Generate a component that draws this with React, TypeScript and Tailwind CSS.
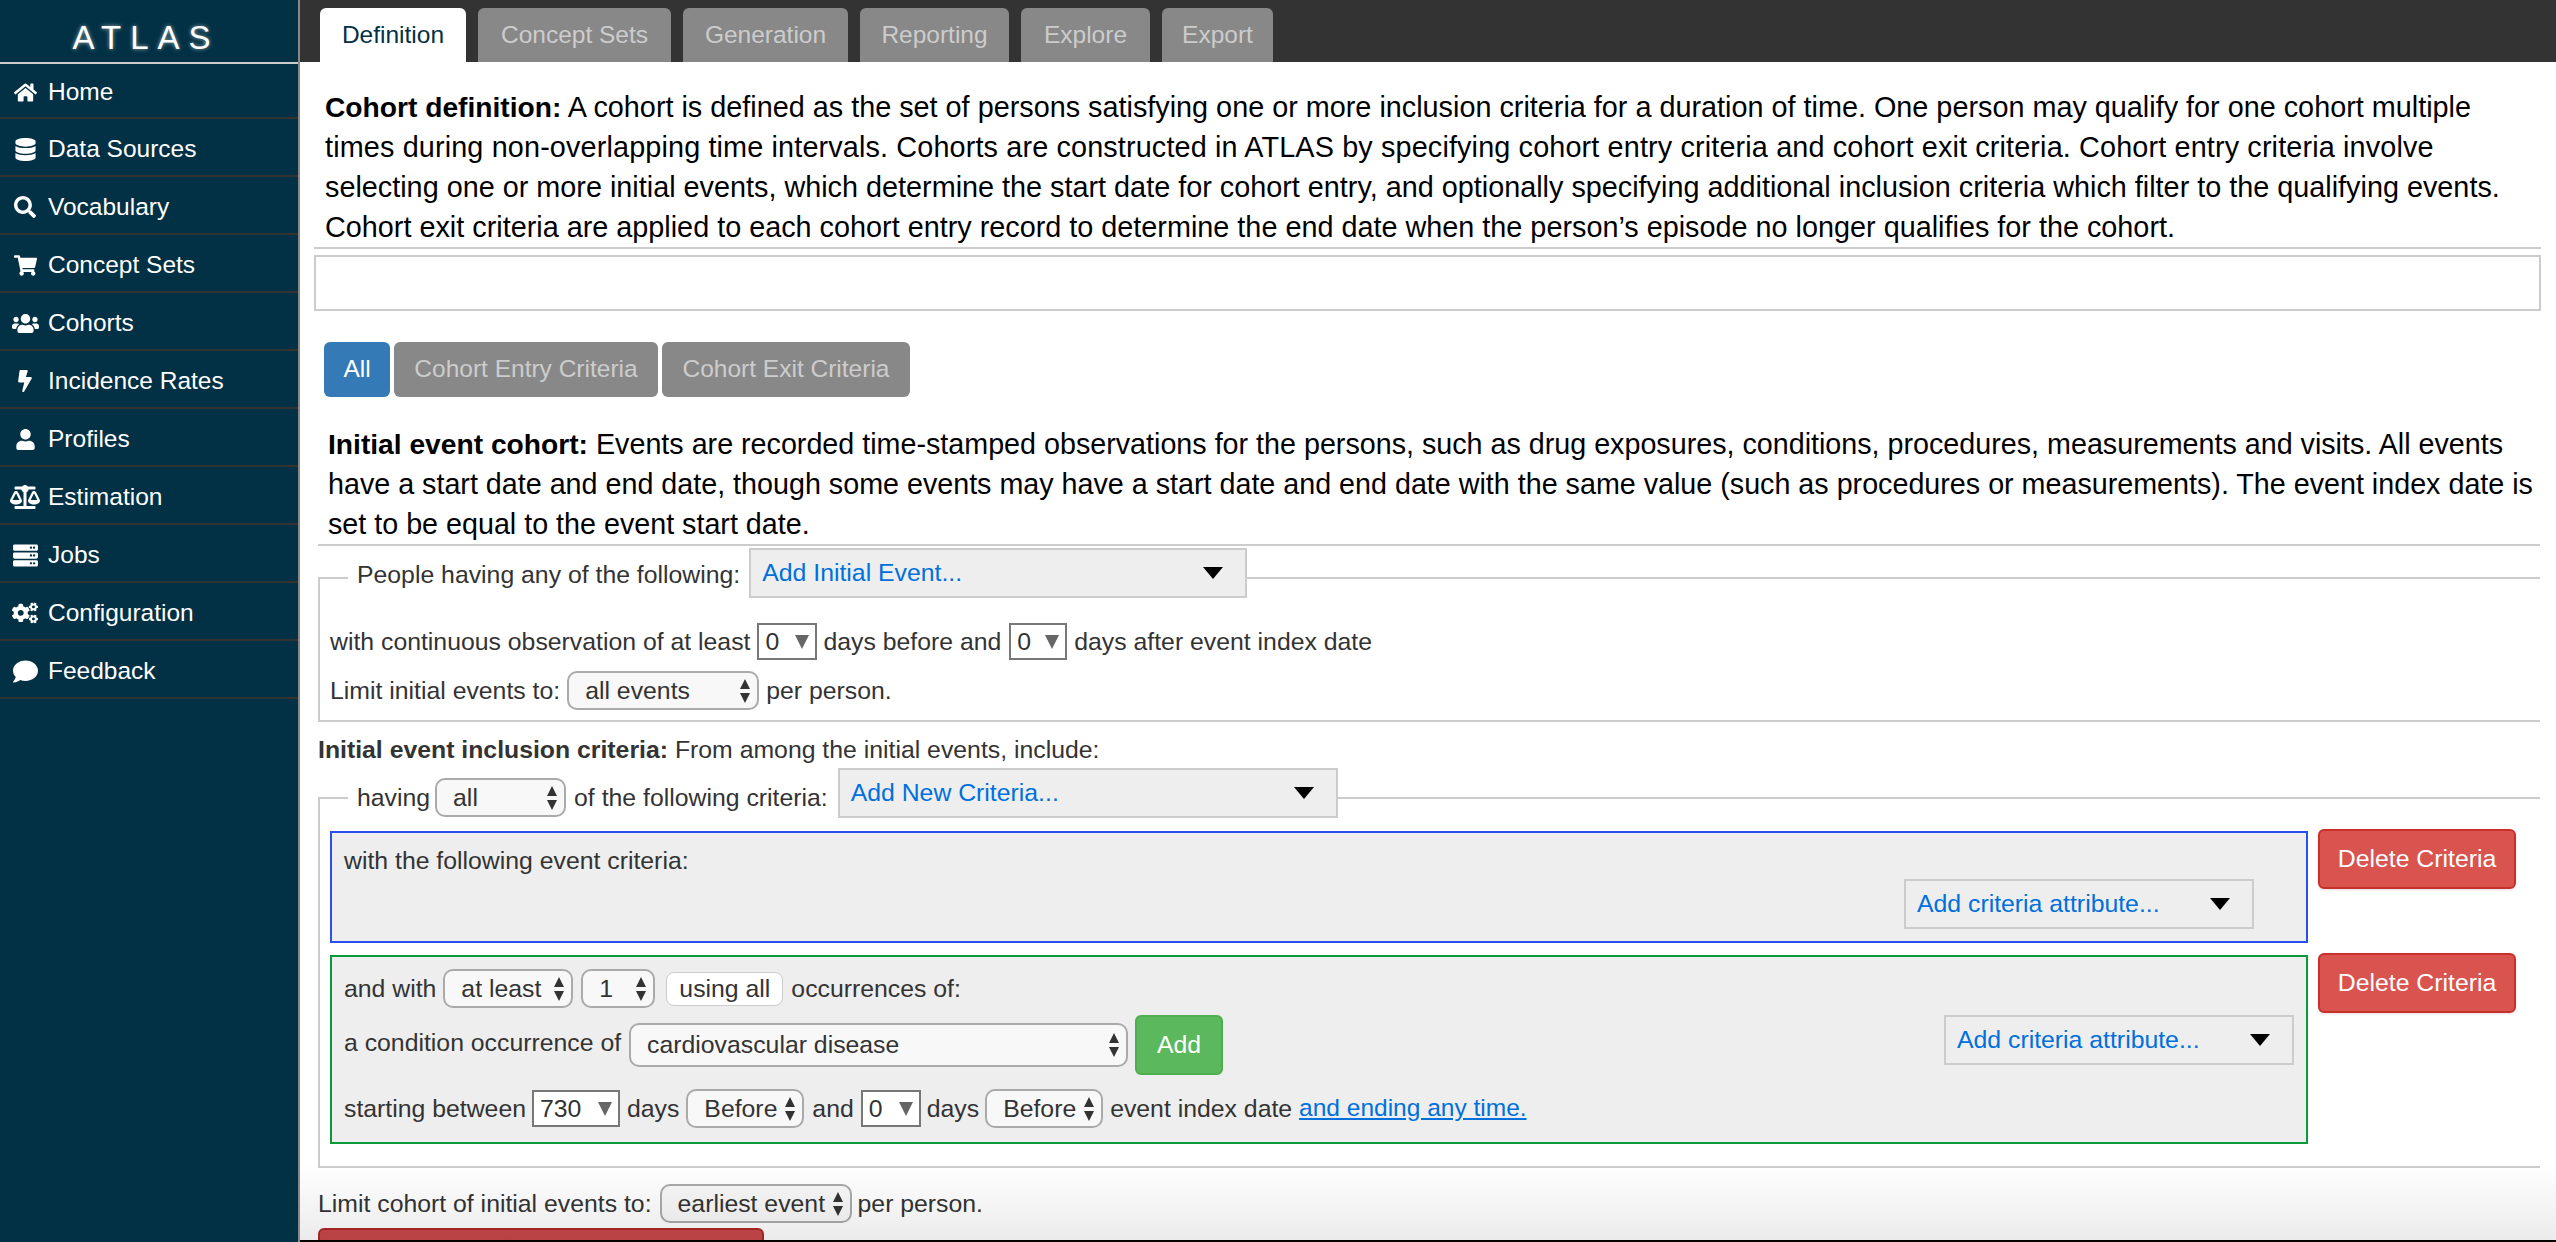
import React from 'react';
import {
  FaHome,
  FaDatabase,
  FaSearch,
  FaShoppingCart,
  FaUsers,
  FaBolt,
  FaUser,
  FaBalanceScale,
  FaServer,
  FaCogs,
  FaComment,
} from 'react-icons/fa';

const navItems = [
  { name: 'Home', icon: FaHome, size: 'text-[23px]' },
  { name: 'Data Sources', icon: FaDatabase, size: 'text-[23px]' },
  { name: 'Vocabulary', icon: FaSearch, size: 'text-[22px]' },
  { name: 'Concept Sets', icon: FaShoppingCart, size: 'text-[23px]' },
  { name: 'Cohorts', icon: FaUsers, size: 'text-[27px]' },
  { name: 'Incidence Rates', icon: FaBolt, size: 'text-[22px]' },
  { name: 'Profiles', icon: FaUser, size: 'text-[21px]' },
  { name: 'Estimation', icon: FaBalanceScale, size: 'text-[30px]' },
  { name: 'Jobs', icon: FaServer, size: 'text-[25px]' },
  { name: 'Configuration', icon: FaCogs, size: 'text-[26px]' },
  { name: 'Feedback', icon: FaComment, size: 'text-[25px]' },
];

const tabs = [
  { name: 'Definition', width: 'w-[146px]' },
  { name: 'Concept Sets', width: 'w-[193px]' },
  { name: 'Generation', width: 'w-[165px]' },
  { name: 'Reporting', width: 'w-[149px]' },
  { name: 'Explore', width: 'w-[129px]' },
  { name: 'Export', width: 'w-[111px]' },
];

// native mac style select: rounded box with the up/down arrows
const Select = ({ label, className }: { label: string; className: string }) => (
  <div className={`flex h-[39px] shrink-0 items-center justify-between rounded-[10px] border-2 border-[#aaa] bg-[#f8f8f8] pl-[16px] pr-[6px] text-[#333] ${className}`}>
    <span>{label}</span>
    <svg width="12" height="26" viewBox="0 0 12 26" className="shrink-0">
      <path d="M6 1 L11 11 H1 Z M6 25 L1 15 H11 Z" fill="#333" />
    </svg>
  </div>
);

const NumberBox = ({ label, className }: { label: string; className: string }) => (
  <div className={`flex h-[37px] shrink-0 items-center justify-between border-2 border-[#777] bg-white pl-[6px] pr-[6px] text-[#333] ${className}`}>
    <span>{label}</span>
    <svg width="14" height="16" viewBox="0 0 14 16" className="shrink-0">
      <path d="M0 1 H14 L7 15 Z" fill="#666" />
    </svg>
  </div>
);

const AddMenu = ({ label, className }: { label: string; className: string }) => (
  <div className={`flex h-[50px] shrink-0 items-center justify-between border-2 border-[#ccc] bg-[#eee] pl-[11px] pr-[22px] text-[#0070dd] ${className}`}>
    <span>{label}</span>
    <svg width="20" height="12" viewBox="0 0 20 12" className="shrink-0">
      <path d="M0 0 H20 L10 12 Z" fill="#000" />
    </svg>
  </div>
);

const DeleteButton = ({ className }: { className: string }) => (
  <div className={`flex h-[60px] w-[198px] shrink-0 items-center justify-center rounded-[6px] border-2 border-[#c9302c] bg-[#d9534f] text-white shadow-sm ${className}`}>
    Delete Criteria
  </div>
);

export default function App() {
  return (
    <div className="relative flex h-[1242px] w-[2556px] overflow-hidden bg-white font-['Liberation_Sans',sans-serif] text-[24.5px] text-[#333]">
      <aside className="w-[300px] shrink-0 border-r-2 border-[#888] bg-[#023044]">
        <div className="flex h-[64px] items-center justify-center border-b-2 border-[#ccc] pr-[6px] pt-[12px] text-[33px] leading-none tracking-[9px] text-white [text-shadow:0_0_4px_rgba(255,255,255,0.6)]">
          ATLAS
        </div>
        {navItems.map((item, i) => {
          const Icon = item.icon;
          return (
            <div key={item.name} className={`flex items-center border-b-2 border-[#333] pt-[4px] text-white ${i === 0 ? 'h-[55px]' : 'h-[58px]'}`}>
              <div className="flex w-[50px] shrink-0 justify-center">
                <Icon className={item.size} />
              </div>
              <span className="-ml-[2px]">{item.name}</span>
            </div>
          );
        })}
      </aside>

      <main className="min-w-0 flex-1">
        <div className="flex h-[62px] gap-[12px] bg-[#333] pl-[20px] pt-[8px]">
          {tabs.map((tab, i) => (
            <div
              key={tab.name}
              className={`flex items-center justify-center rounded-t-[6px] ${tab.width} ${i === 0 ? 'bg-white text-[#023044]' : 'bg-[#888] text-[#ccc]'}`}
            >
              {tab.name}
            </div>
          ))}
        </div>

        <div className="pl-[14px] pr-[15px]">
          <p className="whitespace-nowrap border-b-2 border-[#ccc] pl-[11px] pt-[25px] text-[28.8px] leading-[40px] text-black">
            <b className="text-[28.2px]">Cohort definition:</b> A cohort is defined as the set of persons satisfying one or more inclusion criteria for a duration of time. One person may qualify for one cohort multiple<br />
            <span className="tracking-[0.14px]">times during non-overlapping time intervals. Cohorts are constructed in ATLAS by specifying cohort entry criteria and cohort exit criteria. Cohort entry criteria involve</span><br />
            selecting one or more initial events, which determine the start date for cohort entry, and optionally specifying additional inclusion criteria which filter to the qualifying events.<br />
            Cohort exit criteria are applied to each cohort entry record to determine the end date when the person’s episode no longer qualifies for the cohort.
          </p>
          <div className="mt-[6px] h-[56px] border-2 border-[#ccc]" />

          <div className="mt-[31px] flex h-[55px] gap-[4px] pl-[10px] text-[#ccc]">
            <div className="flex w-[66px] items-center justify-center rounded-[6px] bg-[#337ab7] text-white">All</div>
            <div className="flex w-[264px] items-center justify-center rounded-[6px] bg-[#888]">Cohort Entry Criteria</div>
            <div className="flex w-[248px] items-center justify-center rounded-[6px] bg-[#888]">Cohort Exit Criteria</div>
          </div>

          <p className="ml-[4px] mr-px mt-[27px] whitespace-nowrap border-b-2 border-[#ccc] pl-[10px] text-[28.7px] leading-[40px] text-black">
            <b className="text-[28.2px]">Initial event cohort:</b> Events are recorded time-stamped observations for the persons, such as drug exposures, conditions, procedures, measurements and visits. All events<br />
            have a start date and end date, though some events may have a start date and end date with the same value (such as procedures or measurements). The event index date is<br />
            set to be equal to the event start date.
          </p>

          <div className="ml-[4px] mr-px text-[24.8px]">
            <fieldset className="mt-[2px] border-2 border-r-0 border-[#ccc] pb-[10px] pl-[10px]">
              <legend className="ml-[18px] flex items-start pb-[9px] pl-[9px]">
                <span className="mr-[9px] mt-[8px]">People having any of the following:</span>
                <AddMenu label="Add Initial Event..." className="w-[498px]" />
              </legend>
              <div className="mt-[16px] flex h-[37px] items-center">
                <span>with continuous observation of at least</span>
                <NumberBox label="0" className="ml-[7px] w-[60px]" />
                <span className="ml-[6px]">days before and</span>
                <NumberBox label="0" className="ml-[8px] w-[58px]" />
                <span className="ml-[7px]">days after event index date</span>
              </div>
              <div className="mt-[11px] flex items-center">
                <span>Limit initial events to:</span>
                <Select label="all events" className="ml-[7px] w-[192px]" />
                <span className="ml-[7px]">per person.</span>
              </div>
            </fieldset>

            <div className="mt-[14px] h-[28px] leading-[28px]">
              <b>Initial event inclusion criteria:</b> From among the initial events, include:
            </div>

            <fieldset className="mt-[4px] border-2 border-r-0 border-[#ccc] pb-[22px] pl-[10px]">
              <legend className="ml-[18px] flex items-start pb-[9px] pl-[9px]">
                <div className="mt-[10px] flex items-center">
                  <span>having</span>
                  <Select label="all" className="ml-[5px] w-[131px]" />
                  <span className="ml-[8px] mr-[10px]">of the following criteria:</span>
                </div>
                <AddMenu label="Add New Criteria..." className="w-[500px]" />
              </legend>

              <div className="mt-[4px] flex items-start">
                <div className="h-[112px] w-[1978px] shrink-0 border-2 border-[#2a4ff0] bg-[#eee] pl-[12px] pt-[14px]">
                  <div className="h-[28px] leading-[28px]">with the following event criteria:</div>
                  <div className="mt-[4px] flex justify-end pr-[52px]">
                    <AddMenu label="Add criteria attribute..." className="w-[350px]" />
                  </div>
                </div>
                <DeleteButton className="-mt-[2px] ml-[10px]" />
              </div>

              <div className="mt-[12px] flex items-start">
                <div className="flex h-[189px] w-[1978px] shrink-0 border-2 border-[#0a9a3a] bg-[#eee] pl-[12px] pt-[12px]">
                  <div className="min-w-0 flex-1">
                    <div className="flex items-center">
                      <span>and with</span>
                      <Select label="at least" className="ml-[7px] w-[130px]" />
                      <Select label="1" className="ml-[8px] w-[74px]" />
                      <div className="ml-[11px] flex h-[34px] w-[117px] items-center justify-center rounded-[8px] border border-[#ccc] bg-white">using all</div>
                      <span className="ml-[8px]">occurrences of:</span>
                    </div>
                    <div className="mt-[7px] flex h-[60px] items-center">
                      <span className="-mt-[4px]">a condition occurrence of</span>
                      <Select label="cardiovascular disease" className="ml-[8px] !h-[44px] w-[499px]" />
                      <div className="ml-[7px] flex h-[60px] w-[88px] items-center justify-center rounded-[6px] border-2 border-[#4cae4c] bg-[#5cb85c] text-white">Add</div>
                    </div>
                    <div className="mt-[14px] flex items-center">
                      <span>starting between</span>
                      <NumberBox label="730" className="ml-[6px] w-[88px]" />
                      <span className="ml-[7px]">days</span>
                      <Select label="Before" className="ml-[7px] w-[118px]" />
                      <span className="ml-[8px]">and</span>
                      <NumberBox label="0" className="ml-[7px] w-[60px]" />
                      <span className="ml-[6px]">days</span>
                      <Select label="Before" className="ml-[6px] w-[118px]" />
                      <span className="ml-[7px]">event index date</span>
                      <span className="ml-[7px] text-[24.5px] text-[#0070dd] underline">and ending any time.</span>
                    </div>
                  </div>
                  <AddMenu label="Add criteria attribute..." className="mr-[12px] mt-[46px] w-[350px]" />
                </div>
                <DeleteButton className="-mt-[2px] ml-[10px]" />
              </div>
            </fieldset>

            <div className="mt-[16px] flex items-center">
              <span>Limit cohort of initial events to:</span>
              <Select label="earliest event" className="ml-[8px] w-[192px]" />
              <span className="ml-[6px]">per person.</span>
            </div>
            <div className="mt-[5px] h-[60px] w-[446px] rounded-[6px] border-2 border-[#ac2925] bg-[#c9484a]" />
          </div>
        </div>
      </main>

      {/* window shadow at the bottom edge of the capture */}
      <div className="pointer-events-none absolute bottom-0 left-[300px] right-0 h-[78px] border-b-2 border-black bg-gradient-to-b from-transparent to-[#00000014]" />
    </div>
  );
}
